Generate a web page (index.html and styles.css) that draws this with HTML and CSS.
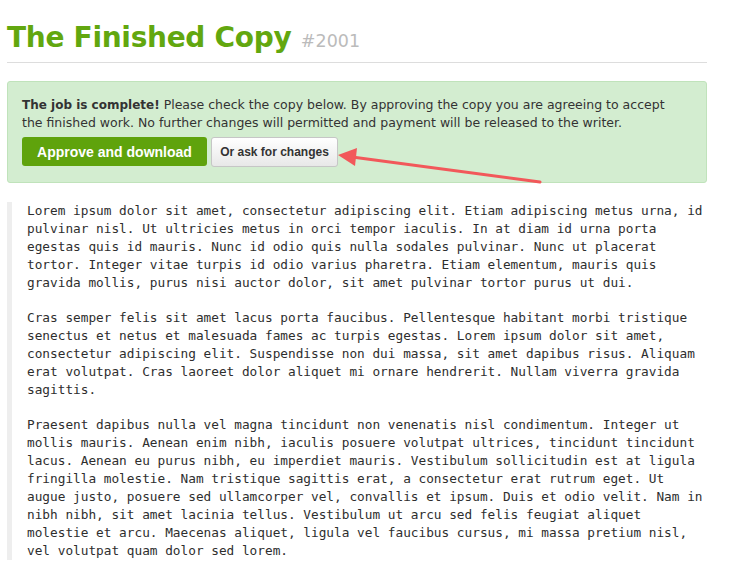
FILE: index.html
```html
<!DOCTYPE html>
<html>
<head>
<meta charset="utf-8">
<link rel="stylesheet" href="styles.css">
</head>
<body>
<div class="page">
  <h1 class="title">The Finished Copy <span class="job-id">#2001</span></h1>
  <div class="notice">
    <p class="notice-text"><strong>The job is complete!</strong> Please check the copy below. By approving the copy you are agreeing to accept the finished work. No further changes will permitted and payment will be released to the writer.</p>
    <div class="actions">
      <a class="btn btn-approve" href="#">Approve and download</a>
      <a class="btn btn-changes" href="#">Or ask for changes</a>
    </div>
  </div>
  <div class="copy">
    <p>Lorem ipsum dolor sit amet, consectetur adipiscing elit. Etiam adipiscing metus urna, id pulvinar nisl. Ut ultricies metus in orci tempor iaculis. In at diam id urna porta egestas quis id mauris. Nunc id odio quis nulla sodales pulvinar. Nunc ut placerat tortor. Integer vitae turpis id odio varius pharetra. Etiam elementum, mauris quis gravida mollis, purus nisi auctor dolor, sit amet pulvinar tortor purus ut dui.</p>
    <p>Cras semper felis sit amet lacus porta faucibus. Pellentesque habitant morbi tristique senectus et netus et malesuada fames ac turpis egestas. Lorem ipsum dolor sit amet, consectetur adipiscing elit. Suspendisse non dui massa, sit amet dapibus risus. Aliquam erat volutpat. Cras laoreet dolor aliquet mi ornare hendrerit. Nullam viverra gravida sagittis.</p>
    <p>Praesent dapibus nulla vel magna tincidunt non venenatis nisl condimentum. Integer ut mollis mauris. Aenean enim nibh, iaculis posuere volutpat ultrices, tincidunt tincidunt lacus. Aenean eu purus nibh, eu imperdiet mauris. Vestibulum sollicitudin est at ligula fringilla molestie. Nam tristique sagittis erat, a consectetur erat rutrum eget. Ut augue justo, posuere sed ullamcorper vel, convallis et ipsum. Duis et odio velit. Nam in nibh nibh, sit amet lacinia tellus. Vestibulum ut arcu sed felis feugiat aliquet molestie et arcu. Maecenas aliquet, ligula vel faucibus cursus, mi massa pretium nisl, vel volutpat quam dolor sed lorem.</p>
  </div>
  <svg class="arrow" width="744" height="584" viewBox="0 0 744 584">
    <line x1="540" y1="182" x2="352" y2="157" stroke="#f2585a" stroke-width="3" stroke-linecap="round"/>
    <polygon points="338,155 357,148 355,166" fill="#f2585a"/>
  </svg>
</div>
</body>
</html>
```

FILE: styles.css
```css
html, body {
  margin: 0;
  padding: 0;
  background: #fff;
}

.page {
  position: relative;
  width: 700px;
  padding: 0 7px;
  font-family: "DejaVu Sans", sans-serif;
  color: #333;
}

.title {
  margin: 0;
  padding: 20px 0 7px;
  border-bottom: 1px solid #dddddd;
  font-family: "DejaVu Sans", sans-serif;
  font-size: 28px;
  line-height: 35px;
  font-weight: bold;
  color: #62a70f;
  letter-spacing: -0.3px;
}

.job-id {
  font-size: 17.5px;
  line-height: 1;
  font-weight: normal;
  color: #bbbbbb;
  letter-spacing: 0;
}

.notice {
  margin-top: 18px;
  background: #d3edd0;
  border: 1px solid #c0e3bb;
  border-radius: 3px;
  padding: 14px 34px 15px 14px;
}

.notice-text {
  margin: 0;
  font-size: 12.5px;
  line-height: 18px;
  color: #333;
}

.notice-text strong {
  font-size: 12px;
}

.actions {
  display: flex;
  align-items: flex-start;
  gap: 4px;
  margin-top: 5px;
}

.btn {
  display: inline-flex;
  align-items: center;
  justify-content: center;
  box-sizing: border-box;
  border-radius: 3px;
  text-decoration: none;
  font-family: "Liberation Sans", Arial, sans-serif;
  font-weight: bold;
}

.btn-approve {
  width: 185px;
  height: 29px;
  background: #5fa30c;
  color: #fff;
  font-size: 14px;
}

.btn-changes {
  width: 127px;
  height: 30px;
  background: linear-gradient(#ffffff, #e8e8e8);
  border: 1px solid #c6c6c6;
  color: #333;
  font-size: 12px;
}

.copy {
  margin-top: 19px;
  border-left: 5px solid #eeeeee;
  padding: 0 0 0 15px;
  font-family: "DejaVu Sans Mono", monospace;
  font-size: 12.75px;
  line-height: 18px;
  color: #2e2e2e;
}

.copy p {
  width: 88.5ch;
  margin: 0 0 17px;
}

.copy p:last-child {
  margin-bottom: 0;
}

.arrow {
  position: absolute;
  left: 0;
  top: 0;
  pointer-events: none;
}
```
